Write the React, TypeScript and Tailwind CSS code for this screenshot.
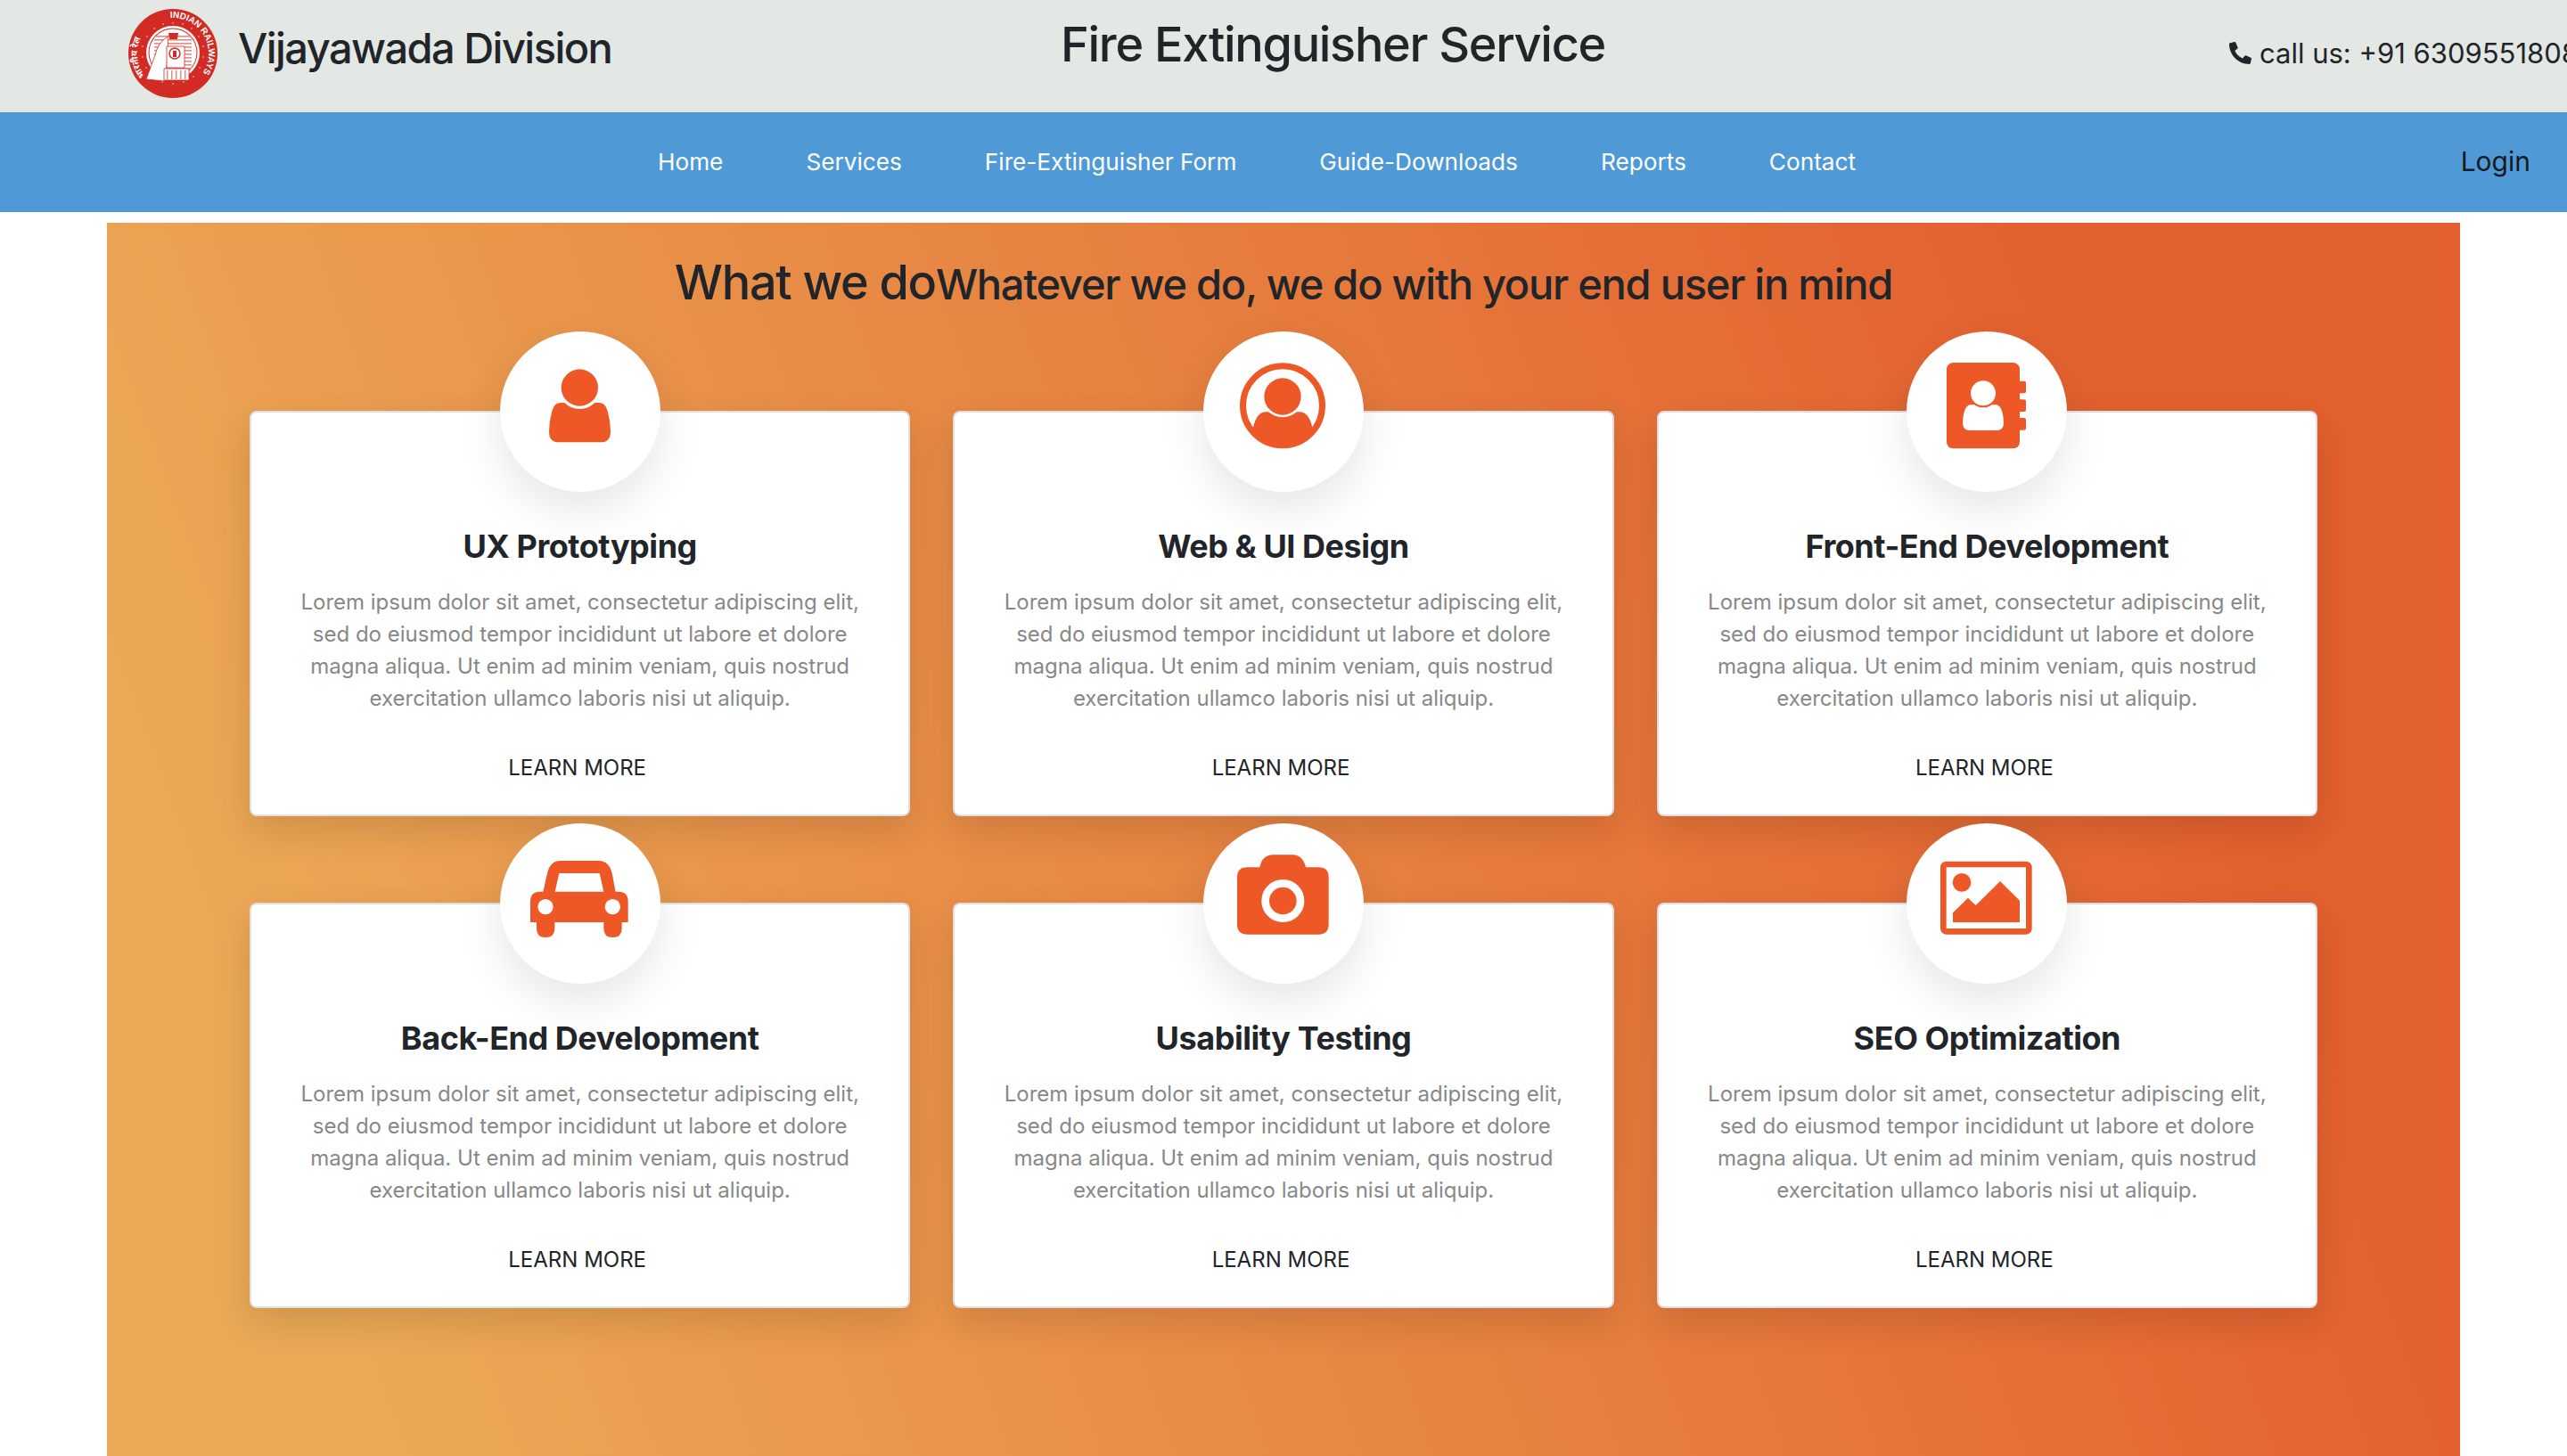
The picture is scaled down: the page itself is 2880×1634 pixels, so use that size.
import React from 'react';
import { FaPhoneAlt } from 'react-icons/fa';

const ORANGE = '#ee5827';

const lorem = [
  'Lorem ipsum dolor sit amet, consectetur adipiscing elit,',
  'sed do eiusmod tempor incididunt ut labore et dolore',
  'magna aliqua. Ut enim ad minim veniam, quis nostrud',
  'exercitation ullamco laboris nisi ut aliquip.',
];

function UserIcon() {
  return (
    <svg viewBox="63 37 540 540" className="w-full h-full">
      <path fill={ORANGE} d="M268 277Q245 277 238 305Q228 340 228 375Q228 410 262 410L401 410Q435 410 435 375Q435 340 425 305Q418 277 395 277Z" />
      <circle cx="331" cy="226" r="72" fill="#fff" />
      <circle cx="331" cy="226" r="62" fill={ORANGE} />
    </svg>
  );
}

function ProfileIcon() {
  return (
    <svg viewBox="60 37 540 540" className="w-full h-full">
      <clipPath id="disc">
        <circle cx="327" cy="287" r="140" />
      </clipPath>
      <circle cx="327" cy="287" r="133.5" fill="none" stroke={ORANGE} strokeWidth="21" />
      <path clipPath="url(#disc)" fill={ORANGE} d="M228 440L228 360Q240 308 270 308L384 308Q415 308 427 360L427 440Z" />
      <circle cx="327" cy="256" r="70" fill="#fff" />
      <circle cx="327" cy="256" r="62" fill={ORANGE} />
    </svg>
  );
}

function ContactBookIcon() {
  return (
    <svg viewBox="57 37 540 540" className="w-full h-full">
      <rect x="192" y="142" width="246" height="289" rx="22" fill={ORANGE} />
      <rect x="425" y="204" width="34" height="41" rx="6" fill={ORANGE} />
      <rect x="425" y="266" width="34" height="41" rx="6" fill={ORANGE} />
      <rect x="425" y="328" width="34" height="41" rx="6" fill={ORANGE} />
      <path fill="#fff" d="M270 284Q248 290 246 345Q246 370 270 370L360 370Q384 370 384 345Q382 290 360 284Z" />
      <circle cx="315" cy="245" r="48" fill={ORANGE} />
      <circle cx="315" cy="245" r="42" fill="#fff" />
    </svg>
  );
}

function CarIcon() {
  return (
    <svg viewBox="63 42 540 540" className="w-full h-full">
      <path fill={ORANGE} d="M265 168L395 168Q430 168 440 210L452 272L462 272Q494 272 494 305L494 375L473 375L473 396Q473 426 442 426Q412 426 412 396L412 375L247 375L247 396Q247 426 216 426Q186 426 186 396L186 375L165 375L165 305Q165 272 197 272L208 272L222 210Q232 168 265 168Z" />
      <path fill="#fff" d="M262 210L398 210L412 272L248 272Z" />
      <circle cx="216" cy="323" r="26" fill="#fff" />
      <circle cx="442" cy="323" r="26" fill="#fff" />
    </svg>
  );
}

function CameraIcon() {
  return (
    <svg viewBox="60 42 540 540" className="w-full h-full">
      <path fill={ORANGE} d="M250 190Q258 148 295 148L360 148Q395 148 405 190L448 190Q482 190 482 224L482 382Q482 416 448 416L208 416Q174 416 174 382L174 224Q174 190 208 190Z" />
      <circle cx="328" cy="303" r="59" fill={ORANGE} stroke="#fff" strokeWidth="26" />
    </svg>
  );
}

function ImageIcon() {
  return (
    <svg viewBox="57 42 540 540" className="w-full h-full">
      <rect x="181" y="180" width="288" height="226" rx="10" fill="none" stroke={ORANGE} strokeWidth="20" />
      <circle cx="243" cy="241" r="31" fill={ORANGE} />
      <path fill={ORANGE} d="M213 375L213 343L264 293L290 318L372 237L438 302L438 375Z" />
    </svg>
  );
}

function RailwayLogo() {
  const stripes = [30, 34, 38, 42, 46, 50, 54, 58, 62, 66];
  const stars = [
    [39, 17], [50, 16], [61, 17], [71, 22], [79, 31], [84, 42], [84, 54], [80, 66], [73, 76],
    [62, 82], [50, 84], [38, 82], [27, 76], [20, 66], [16, 54], [16, 42], [21, 31], [29, 22],
  ];
  return (
    <svg viewBox="0 0 100 100" className="w-[100px] h-[100px] shrink-0">
      <circle cx="50" cy="50" r="50" fill="#d12b24" />
      <defs>
        <path id="rail-top" d="M47 10.1A40 40 0 0 1 78.3 78.3" fill="none" />
        <path id="rail-left" d="M19 75.3A40 40 0 0 1 36.3 12.4" fill="none" />
      </defs>
      <text fill="#fff" fontSize="10" fontWeight="700" fontFamily="'Liberation Sans', sans-serif">
        <textPath href="#rail-top">INDIAN RAILWAYS</textPath>
      </text>
      <text fill="#fff" fontSize="10" fontWeight="700" fontFamily="'Noto Sans', sans-serif">
        <textPath href="#rail-left">भारतीय रेल</textPath>
      </text>
      {stars.map(([x, y], i) => (
        <circle key={i} cx={x} cy={y} r="0.8" fill="#f7d9d6" />
      ))}
      <circle cx="50" cy="49" r="30" fill="#fff" />
      <circle cx="50" cy="49" r="27.5" fill="#d12b24" />
      <circle cx="50" cy="49" r="26.5" fill="#fff" />
      {stripes.map((y) => (
        <rect key={y} x="29" y={y} width="42" height="1.6" fill="#e58b85" />
      ))}
      <path fill="#fff" stroke="#d12b24" strokeWidth="0.8" d="M20 79L30 52Q33 38 44 31L45 46L41 81Z" />
      <path fill="#d12b24" d="M45 27L56 27L55 34L46 34Z" />
      <path fill="#fff" stroke="#d12b24" strokeWidth="0.8" d="M43 42L63 42L63 66L43 66Z" />
      <circle cx="52" cy="50" r="6" fill="#fff" stroke="#d12b24" strokeWidth="1.5" />
      <path fill="#d12b24" d="M50 47L54 47L54 54L50 54Z" />
      <path fill="#fff" stroke="#d12b24" strokeWidth="0.8" d="M40 67L68 67L68 80L40 80Z" />
      <path fill="#e58b85" d="M43 69L44.5 69L44.5 79L43 79ZM48 69L49.5 69L49.5 79L48 79ZM53 69L54.5 69L54.5 79L53 79ZM58 69L59.5 69L59.5 79L58 79ZM63 69L64.5 69L64.5 79L63 79Z" />
    </svg>
  );
}

const services = [
  { title: 'UX Prototyping', icon: <UserIcon /> },
  { title: 'Web & UI Design', icon: <ProfileIcon /> },
  { title: 'Front-End Development', icon: <ContactBookIcon /> },
  { title: 'Back-End Development', icon: <CarIcon /> },
  { title: 'Usability Testing', icon: <CameraIcon /> },
  { title: 'SEO Optimization', icon: <ImageIcon /> },
];

function ServiceCard({ title, icon }: { title: string; icon: React.ReactNode }) {
  return (
    <div className="h-[455px] bg-white border-2 border-[#dfdfdf] rounded-[8px] shadow-[0_16px_40px_rgba(0,0,0,0.12)] flex flex-col items-center text-center">
      <div className="w-[180px] h-[180px] -mt-[91px] shrink-0 rounded-full bg-white shadow-[0_20px_50px_rgba(0,0,0,0.1)]">
        {icon}
      </div>
      <h3 className="mt-[38px] text-[36px] leading-[46px] font-bold tracking-[-0.45px] text-[#212529]">{title}</h3>
      <p className="mt-[22px] text-[24px] leading-[36px] text-[#888888]">
        {lorem.map((line) => (
          <span key={line} className="block whitespace-nowrap">{line}</span>
        ))}
      </p>
      <a className="mt-[42px] -ml-[6px] text-[24px] leading-[36px] text-[#212529]">LEARN MORE</a>
    </div>
  );
}

export default function App() {
  return (
    <div className="h-screen overflow-hidden flex flex-col bg-white text-[#212529] font-['Inter',sans-serif]">
      <header className="h-[126px] shrink-0 bg-[#e3e8e5] flex overflow-hidden whitespace-nowrap">
        <div className="w-[1190px] shrink-0 pl-[144px] pt-[10px] flex items-start gap-[23px]">
          <RailwayLogo />
          <span className="mt-[14px] text-[47px] leading-[60px] font-medium tracking-[-1.55px]">Vijayawada Division</span>
        </div>
        <div className="w-[1311px] shrink-0 pt-[16px]">
          <span className="text-[54px] leading-[68px] font-medium tracking-[-1.3px]">Fire Extinguisher Service</span>
        </div>
        <div className="shrink-0 pt-[40px] flex items-start gap-[9px] text-[31px] leading-[40px]">
          <FaPhoneAlt className="mt-[7px] text-[25px]" />
          <span>call us: +91 6309551808</span>
        </div>
      </header>

      <nav className="h-[112px] shrink-0 bg-[#4f9ad6] flex items-center pl-[738px] pr-[41px] pb-[1px] gap-[93px] text-[26.2px] text-white whitespace-nowrap">
        <a>Home</a>
        <a>Services</a>
        <a>Fire-Extinguisher Form</a>
        <a>Guide-Downloads</a>
        <a>Reports</a>
        <a>Contact</a>
        <a className="ml-auto text-[30px] text-[#16191c]">Login</a>
      </nav>

      <main className="flex-1 mt-[12px] mx-[120px] px-[160px] bg-[linear-gradient(70deg,#eba955_10%,#e3602f_85%)]">
        <h1 className="pt-[33px] h-[120px] text-center text-[#212529] font-medium whitespace-nowrap">
          <span className="text-[54px] leading-[68px] tracking-[-1.3px]">What we do</span>
          <span className="text-[47px] leading-[68px] tracking-[-1.25px]">Whatever we do, we do with your end user in mind</span>
        </h1>
        <div className="mt-[91px] grid grid-cols-3 gap-x-[48px] gap-y-[97px]">
          {services.map((s) => (
            <ServiceCard key={s.title} title={s.title} icon={s.icon} />
          ))}
        </div>
      </main>
    </div>
  );
}
